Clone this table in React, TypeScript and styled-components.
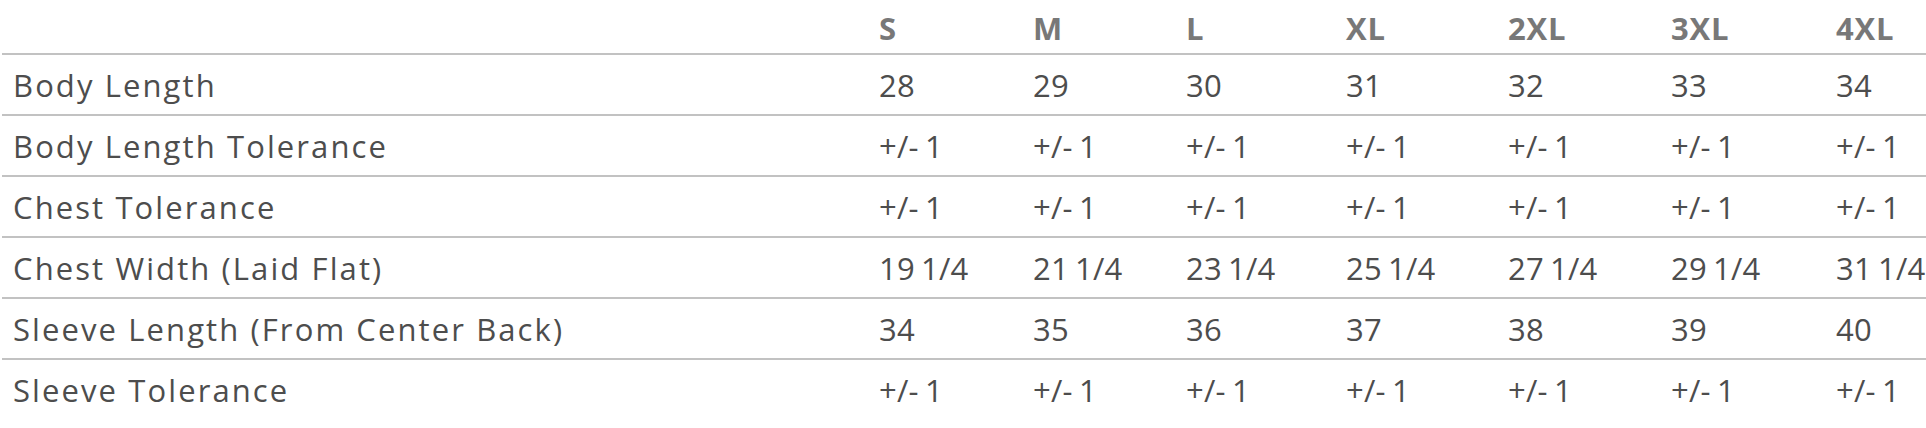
import React from 'react';
import styled, { createGlobalStyle } from 'styled-components';

const GlobalStyle = createGlobalStyle`
  html, body {
    margin: 0;
    padding: 0;
    background: #ffffff;
    overflow: hidden;
  }
`;

const Table = styled.table`
  margin-left: 2px;
  width: 1924px;
  border-collapse: collapse;
  table-layout: fixed;
  font-family: 'Open Sans', 'Liberation Sans', sans-serif;
  font-size: 31px;
`;

const Col = styled.col<{ $w?: number }>`
  width: ${(p) => (p.$w ? `${p.$w}px` : 'auto')};
`;

const HeadRow = styled.tr`
  height: 54px;
  border-bottom: 2px solid #c2c2c2;
`;

const BodyRow = styled.tr`
  height: 61px;
  border-bottom: 2px solid #c2c2c2;

  &:last-child {
    border-bottom: none;
  }
`;

const HeadCell = styled.th`
  padding: 2px 0 0 8px;
  text-align: left;
  font-weight: 700;
  letter-spacing: 0.8px;
  color: #787878;
  white-space: nowrap;
`;

const LabelCell = styled.td`
  padding: 0 0 0 11px;
  text-align: left;
  font-weight: 400;
  letter-spacing: 2.1px;
  color: #4d4d4d;
  white-space: nowrap;
`;

const ValueCell = styled.td`
  padding: 0 0 0 8px;
  text-align: left;
  font-weight: 400;
  letter-spacing: 0.2px;
  word-spacing: -2px;
  color: #4d4d4d;
  white-space: nowrap;
`;

const sizes = ['S', 'M', 'L', 'XL', '2XL', '3XL', '4XL'];
const widths = [869, 154, 153, 160, 162, 163, 165];

const tol = Array(7).fill('+/- 1');

const rows: { label: string; values: string[] }[] = [
  { label: 'Body Length', values: ['28', '29', '30', '31', '32', '33', '34'] },
  { label: 'Body Length Tolerance', values: tol },
  { label: 'Chest Tolerance', values: tol },
  {
    label: 'Chest Width (Laid Flat)',
    values: ['19 1/4', '21 1/4', '23 1/4', '25 1/4', '27 1/4', '29 1/4', '31 1/4'],
  },
  {
    label: 'Sleeve Length (From Center Back)',
    values: ['34', '35', '36', '37', '38', '39', '40'],
  },
  { label: 'Sleeve Tolerance', values: tol },
];

const App: React.FC = () => {
  return (
    <>
      <GlobalStyle />
      <Table>
        <colgroup>
          {widths.map((w, i) => (
            <Col key={i} $w={w} />
          ))}
          <Col />
        </colgroup>
        <thead>
          <HeadRow>
            <HeadCell />
            {sizes.map((s) => (
              <HeadCell key={s}>{s}</HeadCell>
            ))}
          </HeadRow>
        </thead>
        <tbody>
          {rows.map((r) => (
            <BodyRow key={r.label}>
              <LabelCell>{r.label}</LabelCell>
              {r.values.map((v, i) => (
                <ValueCell key={i}>{v}</ValueCell>
              ))}
            </BodyRow>
          ))}
        </tbody>
      </Table>
    </>
  );
};

export default App;
